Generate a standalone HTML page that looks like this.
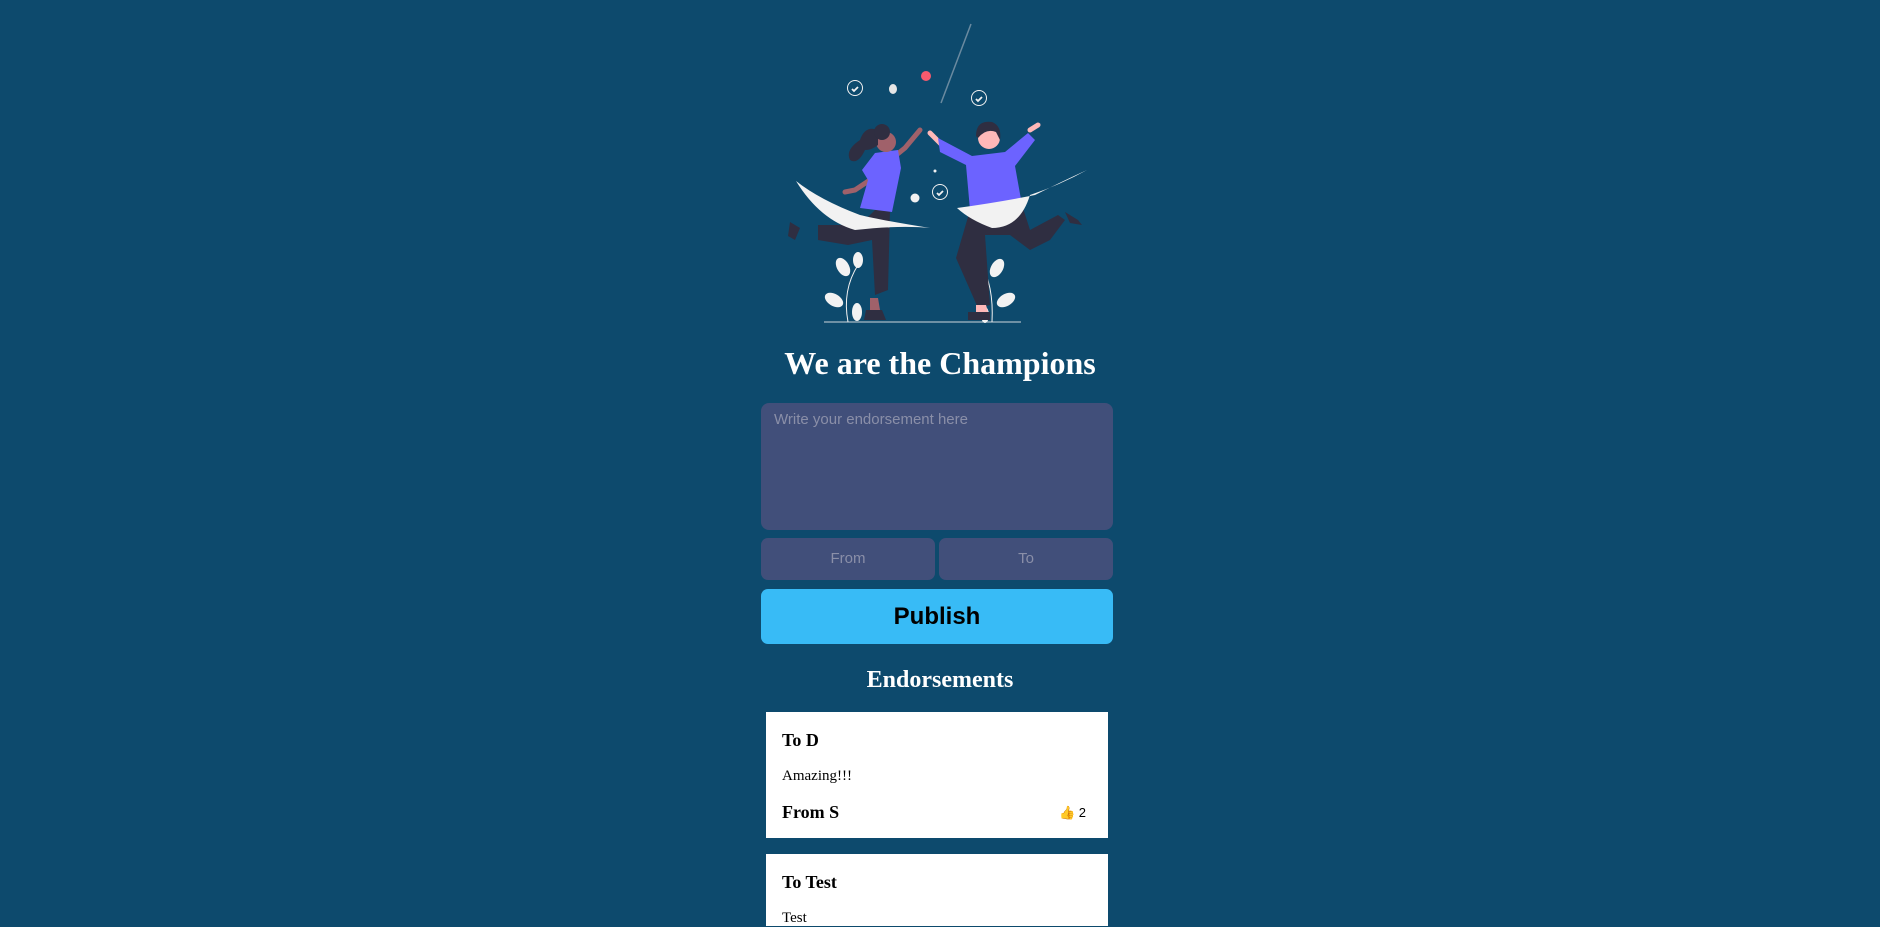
<!DOCTYPE html>
<html><head><meta charset="utf-8"><style>
html,body{margin:0;padding:0;width:1880px;height:926px;overflow:hidden;background:#0d4a6d;}
.a{position:absolute;}
.title{left:0;width:1880px;top:345px;text-align:center;font:bold 32px "Liberation Serif",serif;color:#fff;}
.ta{left:761px;top:403px;width:352px;height:127px;background:#414f7a;border-radius:8px;}
.ta span{position:absolute;left:13px;top:8px;font:15px "Liberation Sans",sans-serif;color:#8a8fa8;}
.in{top:538px;width:174px;height:42px;background:#414f7a;border-radius:7px;font:15px "Liberation Sans",sans-serif;color:#8a8fa8;text-align:center;line-height:42px;}
.pub{left:761px;top:589px;width:352px;height:55px;background:#38bbf6;border-radius:7px;font:bold 24px "Liberation Sans",sans-serif;color:#000;text-align:center;line-height:55px;}
.eh{left:0;width:1880px;top:667px;text-align:center;font:bold 24px "Liberation Serif",serif;color:#fff;}
.card{left:766px;width:342px;background:#fff;font-family:"Liberation Serif",serif;color:#000;}
.card .t{position:absolute;left:16px;font-weight:bold;font-size:18px;}
.card .m{position:absolute;left:16px;font-size:15px;}
.lk{position:absolute;right:22px;font:13px "Liberation Sans",sans-serif;}
</style></head><body>
<svg class="a" style="left:760px;top:0" width="360" height="340" viewBox="0 0 360 340">
<line x1="211" y1="24" x2="181" y2="103" stroke="#6a8aa0" stroke-width="1.5"/>
<circle cx="166" cy="76" r="5" fill="#f65a6e"/>
<ellipse cx="133" cy="89" rx="4" ry="5" fill="#e6e6e6"/>
<circle cx="155" cy="198" r="4.5" fill="#f2f2f2"/>
<circle cx="175" cy="171" r="1.5" fill="#f2f2f2"/>
<g fill="none" stroke="#f2f2f2" stroke-width="1">
<circle cx="95" cy="88" r="7.5"/><circle cx="219" cy="98" r="7.5"/><circle cx="180" cy="192" r="7.5"/>
</g>
<g fill="none" stroke="#f2f2f2" stroke-width="1.8">
<path d="M92 89l2 2 4-4"/><path d="M216 99l2 2 4-4"/><path d="M177 193l2 2 4-4"/>
</g>
<line x1="64" y1="322" x2="261" y2="322" stroke="#d0d6dc" stroke-width="1"/>
<g fill="#f2f2f2">
<path d="M88 322 Q82 290 98 265" stroke="#f2f2f2" fill="none"/>
<ellipse cx="83" cy="267" rx="6" ry="10" transform="rotate(-30 83 267)"/>
<ellipse cx="98" cy="260" rx="5" ry="8"/>
<ellipse cx="74" cy="300" rx="10" ry="6" transform="rotate(30 74 300)"/>
<ellipse cx="97" cy="312" rx="5" ry="9"/>
<path d="M232 322 Q234 285 220 262" stroke="#f2f2f2" fill="none"/>
<ellipse cx="220" cy="262" rx="5" ry="9"/>
<ellipse cx="237" cy="268" rx="6" ry="10" transform="rotate(30 237 268)"/>
<ellipse cx="246" cy="300" rx="10" ry="6" transform="rotate(-30 246 300)"/>
<ellipse cx="225" cy="315" rx="4" ry="8"/>
</g>
<path d="M160 130 L145 148 L135 156" stroke="#a0616a" stroke-width="5" fill="none" stroke-linecap="round"/>
<path d="M110 180 L95 190 L85 192" stroke="#a0616a" stroke-width="5" fill="none" stroke-linecap="round"/>
<path d="M65 232 L82 236" stroke="#a0616a" stroke-width="6"/>
<path d="M30 222 L40 228 L35 240 L28 236Z" fill="#2f2e41"/>
<path d="M58 225 L100 225 L115 210 L130 210 L128 290 L115 295 L112 240 L88 245 L58 240Z" fill="#2f2e41"/>
<path d="M110 298 L118 298 L120 310 L110 310Z" fill="#a0616a"/>
<path d="M106 310 L122 310 L126 320 L104 320Z" fill="#2f2e41"/>
<path d="M115 153 L138 150 L141 168 L132 212 L100 208 L108 180 L102 170Z" fill="#6c63ff"/>
<circle cx="126" cy="142" r="10" fill="#a0616a"/>
<path d="M118 130 Q105 125 100 140 Q85 150 90 160 Q98 165 105 150 Q112 150 118 145Z" fill="#2f2e41"/>
<circle cx="122" cy="132" r="8" fill="#2f2e41"/>
<path d="M170 133 L182 145" stroke="#ffb8b8" stroke-width="5" stroke-linecap="round"/>
<path d="M270 130 L278 125" stroke="#ffb8b8" stroke-width="5" stroke-linecap="round"/>
<circle cx="229" cy="138" r="11" fill="#ffb8b8"/>
<path d="M216 136 Q216 120 232 122 Q242 126 240 140 L236 132 Q226 128 218 138Z" fill="#2f2e41"/>
<path d="M178 138 L212 156 L245 152 L268 133 L275 140 L255 166 L262 205 L210 210 L206 165 L180 152Z" fill="#6c63ff"/>
<path d="M210 210 L262 205 L270 230 L298 215 L305 220 L290 240 L270 250 L250 235 L225 235 L230 305 L218 308 L196 258Z" fill="#2f2e41"/>
<path d="M305 212 L318 220 L322 225 L310 223Z" fill="#2f2e41"/>
<path d="M216 305 L226 305 L228 312 L216 312Z" fill="#ffb8b8"/>
<path d="M208 312 L230 312 L230 320 L208 320Z" fill="#2f2e41"/>
<path d="M36 181 Q60 220 95 230 Q140 225 170 228 Q120 220 100 215 Q60 200 36 181Z" fill="#f2f2f2"/>
<path d="M197 208 Q240 202 275 195 Q305 180 327 170 Q300 185 270 195 Q260 228 232 228 Q210 220 197 208Z" fill="#f2f2f2"/>
</svg>
<div class="a title">We are the Champions</div>
<div class="a ta"><span>Write your endorsement here</span></div>
<div class="a in" style="left:761px">From</div>
<div class="a in" style="left:939px">To</div>
<div class="a pub">Publish</div>
<div class="a eh">Endorsements</div>
<div class="a card" style="top:712px;height:126px">
<div class="t" style="top:18px">To D</div>
<div class="m" style="top:56px">Amazing!!!</div>
<div class="t" style="top:90px">From S</div>
<div class="lk" style="top:93px">👍 2</div>
</div>
<div class="a card" style="top:854px;height:72px">
<div class="t" style="top:18px">To Test</div>
<div class="m" style="top:56px">Test</div>
</div>
</body></html>
